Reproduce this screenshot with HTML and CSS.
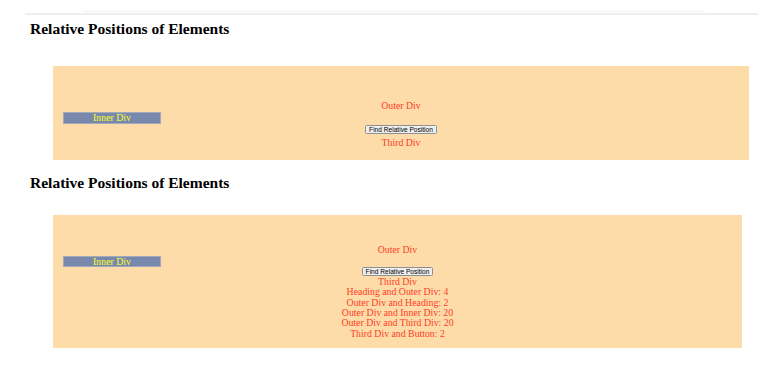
FILE: index.html
```html
<!DOCTYPE html>
<html lang="en">
<head>
    <meta charset="UTF-8">
    <meta name="viewport" content="width=device-width, initial-scale=1.0">
    <title>Relative Positions of Elements</title>
    <link rel="stylesheet" href="styles.css">
</head>
<body>

    <div class="top-rules">
        <div class="rule-a"></div>
        <div class="rule-b"></div>
    </div>

    <h2 class="heading first">Relative Positions of Elements</h2>
    <div class="outer outer-one">
        <div class="label">Outer Div</div>
        <div class="inner">Inner Div</div>
        <div class="btn-row"><button class="btn">Find Relative Position</button></div>
        <div class="label third">Third Div</div>
    </div>

    <h2 class="heading second">Relative Positions of Elements</h2>
    <div class="outer outer-two">
        <div class="label">Outer Div</div>
        <div class="inner">Inner Div</div>
        <div class="btn-row"><button class="btn">Find Relative Position</button></div>
        <div class="label third">Third Div</div>
        <div class="label">Heading and Outer Div: 4</div>
        <div class="label">Outer Div and Heading: 2</div>
        <div class="label">Outer Div and Inner Div: 20</div>
        <div class="label">Outer Div and Third Div: 20</div>
        <div class="label">Third Div and Button: 2</div>
    </div>

</body>
</html>
```

FILE: styles.css
```css
body {
    margin: 0;
    font-family: "Liberation Serif", "Times New Roman", serif;
    background-color: white;
}
.top-rules {
    padding-top: 11px;
}
.rule-a {
    margin-left: 82px;
    width: 623px;
    height: 1px;
    background-color: #f1f1f1;
}
.rule-b {
    margin: 1px 0 0 25px;
    width: 733px;
    height: 2px;
    background-color: #eeeeee;
}
.heading {
    font-size: 15.5px;
    font-weight: bold;
    line-height: 18px;
    margin: 0 0 0 30px;
    color: black;
}
.first {
    margin-top: 5px;
}
.second {
    margin-top: 14px;
}
.outer {
    background-color: #fddcaa;
    margin-left: 53px;
    text-align: center;
    padding-left: 10px;
    padding-right: 10px;
    box-sizing: border-box;
}
.outer-one {
    width: 696px;
    margin-top: 28px;
    padding-top: 35px;
    padding-bottom: 12px;
}
.outer-two {
    width: 689px;
    margin-top: 23px;
    padding-top: 30px;
    padding-bottom: 9px;
}
.label {
    color: #ff3d1f;
    font-size: 9.8px;
    line-height: 10.4px;
}
.inner {
    width: 98px;
    height: 12px;
    box-sizing: border-box;
    margin-top: 1px;
    background-color: #7888ab;
    border: 1px solid #a3a9bd;
    color: #ffff2a;
    font-size: 9.8px;
    line-height: 10px;
}
.btn-row {
    margin-top: 1px;
    height: 9px;
}
.btn {
    display: inline-block;
    vertical-align: top;
    height: 9px;
    padding: 0 3px;
    margin: 0;
    font-family: "Liberation Sans", Arial, sans-serif;
    font-size: 6.6px;
    line-height: 7px;
    color: black;
    background-color: #efefef;
    border: 1px solid #8f8f8f;
    border-radius: 1.5px;
}
.third {
    margin-top: 3.6px;
}
.outer-two .inner {
    height: 11px;
    margin-top: 0;
    line-height: 9px;
}
.outer-two .btn-row {
    margin-top: 0;
}
.outer-two .third {
    margin-top: 1px;
}
```
